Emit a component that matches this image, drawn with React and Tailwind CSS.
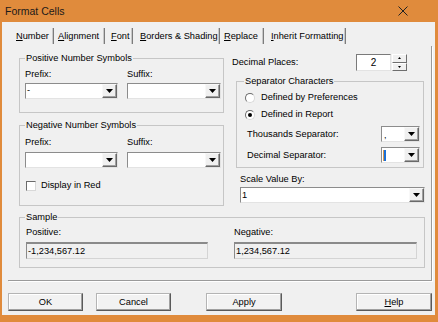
import React from 'react';

const Arrow = () => (
  <svg width="7" height="4" viewBox="0 0 7 4"><path d="M0 0h7L3.5 4z" fill="#000" /></svg>
);

// classic sunken combobox with a raised drop button
const Combo = ({ className = '', children }) => (
  <div className={`flex h-[16px] bg-white border border-t-[#8c8c8c] border-l-[#8c8c8c] border-b-[#e3e3e3] border-r-[#e3e3e3] ${className}`}>
    <div className="flex-1 flex items-center pl-[1px] overflow-hidden">{children}</div>
    <div className="w-[15px] flex items-center justify-center bg-[#f0f0f0] border border-t-[#f8f8f8] border-l-[#f8f8f8] border-b-[#696969] border-r-[#696969] shadow-[inset_-1px_-1px_0_#a0a0a0]">
      <Arrow />
    </div>
  </div>
);

const Radio = ({ checked, label, className = '' }) => (
  <div className={`flex items-center h-[11px] pl-[8px] ${className}`}>
    <div className="w-[10px] h-[10px] rounded-full bg-white border border-t-[#6b6b6b] border-l-[#6b6b6b] border-b-[#d8d8d8] border-r-[#d8d8d8] flex items-center justify-center">
      {checked && <div className="w-[4px] h-[4px] rounded-full bg-black" />}
    </div>
    <span className="ml-[6px]">{label}</span>
  </div>
);

const Btn = ({ className = '', children }) => (
  <div className={`h-[18px] flex items-center justify-center bg-[#f2f2f2] border border-t-[#b4b4b4] border-l-[#b4b4b4] border-b-[#5a5a5a] border-r-[#5a5a5a] shadow-[inset_-1px_-1px_0_#a0a0a0,inset_1px_1px_0_#fff] ${className}`}>
    {children}
  </div>
);

const Field = ({ children }) => (
  <div className="h-[17px] flex items-center pl-[1px] bg-[#f0f0f0] border-t-2 border-l border-b border-r border-t-[#8a8a8a] border-l-[#8a8a8a] border-b-[#d4d4d4] border-r-[#d4d4d4]">
    {children}
  </div>
);

const U = ({ children }) => <span className="underline underline-offset-[1px]">{children}</span>;

const tabs = [
  { a: 'N', b: 'umber', cls: 'w-[38px]' },
  { a: 'A', b: 'lignment', cls: 'w-[47px] ml-[4px]' },
  { a: 'F', b: 'ont', cls: 'w-[22px] ml-[6px]' },
  { a: 'B', b: 'orders & Shading', cls: 'w-[79px] ml-[7px]' },
  { a: 'R', b: 'eplace', cls: 'w-[40px] ml-[5px]' },
  { a: 'I', b: 'nherit Formatting', cls: 'w-[74px] ml-[7px]' },
];

const App = () => {
  return (
    <div className="w-[438px] h-[322px] bg-[#e08b3c] flex flex-col overflow-hidden font-['Liberation_Sans',Arial,sans-serif] text-[9.25px] leading-[11px] text-black">
      {/* title bar */}
      <div className="h-[22px] shrink-0 flex items-center justify-between pl-[5px] pr-[30px]">
        <span className="text-[10.5px] text-[#1a1a1a]">Format Cells</span>
        <svg width="10" height="10" viewBox="0 0 10 10">
          <path d="M0.5 0.5L9.5 9.5M9.5 0.5L0.5 9.5" stroke="#222" strokeWidth="1" />
        </svg>
      </div>

      <div className="ml-[2px] mr-[3px] h-[293px] bg-[#f0f0f0] flex flex-col">
        {/* tabs */}
        <div className="mt-[4px] h-[20px] flex items-center pl-[14px]">
          {tabs.map((t) => (
            <div key={t.a} className={`flex items-center ${t.cls}`}>
              <span className="flex-1 whitespace-nowrap"><U>{t.a}</U>{t.b}</span>
              <span className="w-[2px] h-[16px] border-l border-r border-l-[#c8c8c8] border-r-[#7c7c7c]" />
            </div>
          ))}
        </div>

        {/* tab panel */}
        <div className="ml-[6px] w-[424px] h-[235px] border-r border-b border-[#9a9a9a] shadow-[1px_1px_0_#fff] flex flex-col">
          <div className="flex pl-[11px]">
            {/* left column */}
            <div className="w-[205px] flex flex-col">
              <fieldset className="mt-[7px] h-[60px] border border-[#c6c6c6]">
                <legend className="ml-[5px] px-[1px]">Positive Number Symbols</legend>
                <div className="grid grid-cols-[93px_94px] gap-x-[9px] pl-[5px] mt-[5px]">
                  <span>Prefix:</span>
                  <span>Suffix:</span>
                  <Combo className="mt-[3px]"><span className="leading-none">-</span></Combo>
                  <Combo className="mt-[3px]" />
                </div>
              </fieldset>

              <fieldset className="mt-[7px] h-[86px] border border-[#c6c6c6]">
                <legend className="ml-[5px] px-[1px]">Negative Number Symbols</legend>
                <div className="grid grid-cols-[93px_94px] gap-x-[9px] pl-[5px] mt-[6px]">
                  <span>Prefix:</span>
                  <span>Suffix:</span>
                  <Combo className="mt-[4px]" />
                  <Combo className="mt-[4px]" />
                </div>
                <div className="flex items-center h-[11px] mt-[12px] pl-[6px]">
                  <div className="w-[10px] h-[10px] bg-white border border-t-[#6b6b6b] border-l-[#6b6b6b] border-b-[#d8d8d8] border-r-[#d8d8d8]" />
                  <span className="ml-[5px]">Display in Red</span>
                </div>
              </fieldset>
            </div>

            {/* right column */}
            <div className="ml-[8px] w-[193px] flex flex-col">
              <div className="mt-[8px] h-[17px] flex items-center justify-between pr-[18px]">
                <span>Decimal Places:</span>
                <div className="flex gap-[1px]">
                  <div className="w-[35px] h-[17px] bg-white flex items-center justify-center text-[10px] border border-t-[#7a7a7a] border-l-[#7a7a7a] border-b-[#e3e3e3] border-r-[#e3e3e3]">2</div>
                  <div className="w-[15px] h-[17px] flex flex-col">
                    <div className="h-[8.5px] flex items-center justify-center bg-[#f0f0f0] border border-t-white border-l-white border-b-[#6e6e6e] border-r-[#6e6e6e]">
                      <svg width="3" height="2" viewBox="0 0 3 2"><path d="M0 2h3L1.5 0z" fill="#000" /></svg>
                    </div>
                    <div className="h-[8.5px] flex items-center justify-center bg-[#f0f0f0] border border-t-white border-l-white border-b-[#6e6e6e] border-r-[#6e6e6e]">
                      <svg width="3" height="2" viewBox="0 0 3 2"><path d="M0 0h3L1.5 2z" fill="#000" /></svg>
                    </div>
                  </div>
                </div>
              </div>

              <fieldset className="ml-[4px] w-[188px] mt-[5px] h-[92px] border border-[#c6c6c6]">
                <legend className="ml-[7px] px-[1px]">Separator Characters</legend>
                <Radio className="mt-[5px]" label="Defined by Preferences" />
                <Radio className="mt-[6px]" checked label="Defined in Report" />
                <div className="mt-[6px] h-[16px] flex items-center justify-between pl-[10px] pr-[3px]">
                  <span>Thousands Separator:</span>
                  <Combo className="w-[39px]"><span className="text-[9px] leading-none pt-[3px] pl-[1px]">,</span></Combo>
                </div>
                <div className="mt-[5px] h-[16px] flex items-center justify-between pl-[10px] pr-[3px]">
                  <span>Decimal Separator:</span>
                  <Combo className="w-[39px]"><span className="w-[3px] h-[11px] bg-[#1a6fd6] border-l border-[#d99a50]" /></Combo>
                </div>
              </fieldset>

              <span className="mt-[6px] pl-[8px]">Scale Value By:</span>
              <Combo className="mt-[2px] ml-[8px] w-[185px]"><span>1</span></Combo>
            </div>
          </div>

          <fieldset className="mt-[6px] ml-[11px] w-[406px] h-[56px] border border-[#c6c6c6]">
            <legend className="ml-[5px] px-[1px]">Sample</legend>
            <div className="grid grid-cols-[182px_183px] gap-x-[26px] pl-[6px] mt-[4px]">
              <span>Positive:</span>
              <span>Negative:</span>
              <div className="mt-[4px]"><Field>-1,234,567.12</Field></div>
              <div className="mt-[4px]"><Field>1,234,567.12</Field></div>
            </div>
          </fieldset>
        </div>

        {/* dialog buttons */}
        <div className="mt-[12px] flex pl-[6px]">
          <Btn className="w-[75px]">OK</Btn>
          <Btn className="w-[75px] ml-[13px]">Cancel</Btn>
          <Btn className="w-[76px] ml-[35px]">Apply</Btn>
          <Btn className="w-[76px] ml-[74px]"><span><U>H</U>elp</span></Btn>
        </div>
      </div>
    </div>
  );
};

export default App;
